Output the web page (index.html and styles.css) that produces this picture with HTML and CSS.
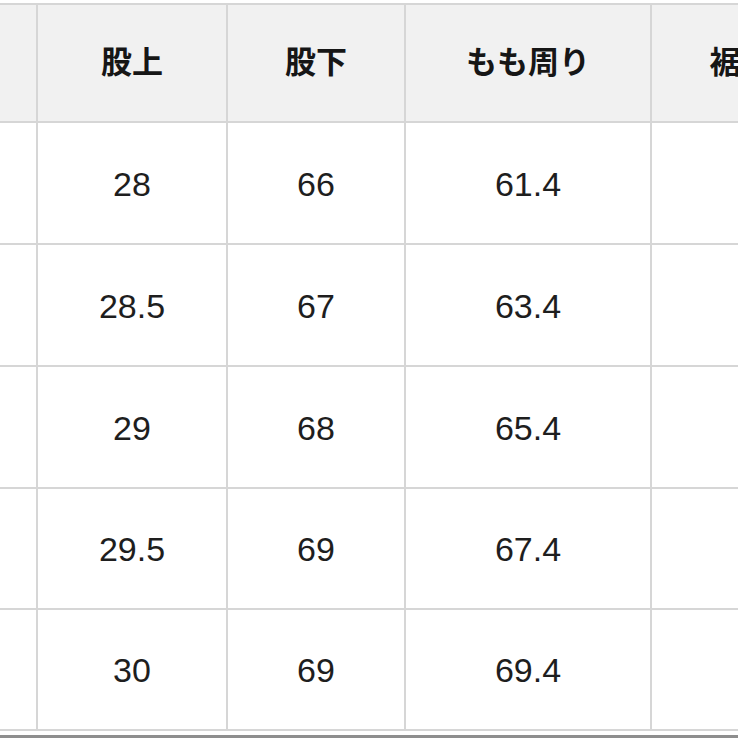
FILE: index.html
```html
<!DOCTYPE html>
<html lang="ja">
<head>
<meta charset="utf-8">
<title>サイズ表</title>
<link rel="stylesheet" href="styles.css">
</head>
<body>
<div class="page">
  <div class="size-table">
    <div class="cell head"></div>
    <div class="cell head">股上</div>
    <div class="cell head">股下</div>
    <div class="cell head">もも周り</div>
    <div class="cell head">裾周り</div>

    <div class="cell"></div>
    <div class="cell">28</div>
    <div class="cell">66</div>
    <div class="cell">61.4</div>
    <div class="cell"></div>

    <div class="cell"></div>
    <div class="cell">28.5</div>
    <div class="cell">67</div>
    <div class="cell">63.4</div>
    <div class="cell"></div>

    <div class="cell"></div>
    <div class="cell">29</div>
    <div class="cell">68</div>
    <div class="cell">65.4</div>
    <div class="cell"></div>

    <div class="cell"></div>
    <div class="cell">29.5</div>
    <div class="cell">69</div>
    <div class="cell">67.4</div>
    <div class="cell"></div>

    <div class="cell"></div>
    <div class="cell">30</div>
    <div class="cell">69</div>
    <div class="cell">69.4</div>
    <div class="cell"></div>
  </div>
  <div class="bottom-rule"></div>
</div>
</body>
</html>
```

FILE: styles.css
```css
html, body {
  margin: 0;
  padding: 0;
  background: #ffffff;
  overflow: hidden;
}

.page {
  width: 738px;
  height: 738px;
  overflow: hidden;
  padding-top: 3px;
  box-sizing: border-box;
}

.size-table {
  display: grid;
  grid-template-columns: 100px 188px 176px 244px 208px;
  grid-template-rows: 116px 120px 120px 120px 119px 119px;
  gap: 2px;
  padding: 2px 0;
  width: max-content;
  margin-left: -64px;
  background: #d6d6d6;
}

.cell {
  display: flex;
  align-items: center;
  justify-content: center;
  background: #ffffff;
  color: #1e1e1e;
  font-family: "Liberation Sans", "Noto Sans CJK JP", sans-serif;
  font-size: 34px;
  padding-top: 2px;
  box-sizing: border-box;
}

.head {
  background: #f1f1f1;
  font-family: "Noto Sans CJK JP", "Noto Sans", sans-serif;
  font-weight: 700;
  font-size: 31px;
  color: #161616;
  padding-top: 0;
  padding-bottom: 7px;
}

.bottom-rule {
  margin-top: 4px;
  height: 4px;
  background: #8e8e8e;
}
```
